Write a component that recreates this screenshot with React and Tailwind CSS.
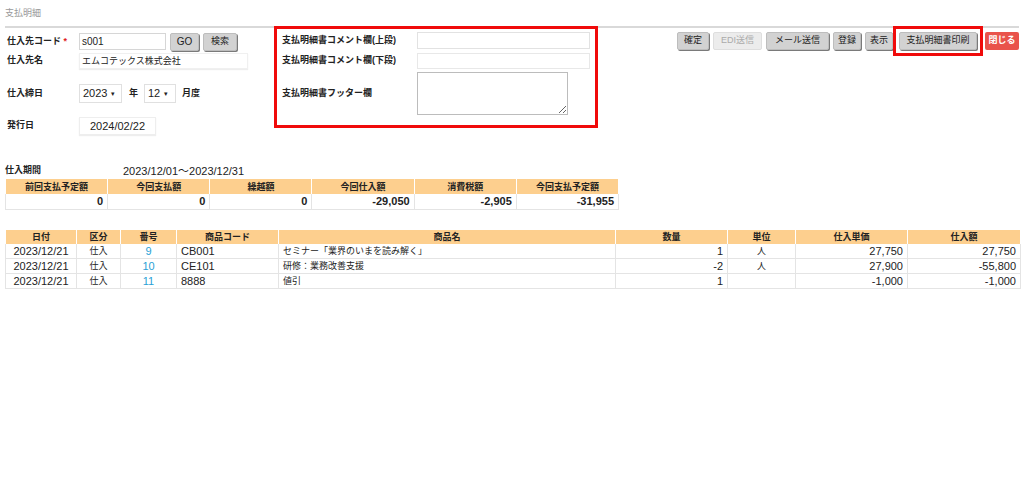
const font = "font-['Liberation_Sans','Noto_Sans_CJK_JP',sans-serif]";

function Btn({ children, className = "" }) {
  return (
    <button className={`h-[18px] flex items-center justify-center rounded-[2px] bg-[#d2d2d2] border border-[#bdbdbd] shadow-[1px_1px_0_#7a7a7a] text-[9px] text-[#222] ${className}`}>
      {children}
    </button>
  );
}

function Label({ children }) {
  return <div className="w-[72px] text-[9px] font-bold text-[#222]">{children}</div>;
}

const summaryHead = ["前回支払予定額", "今回支払額", "繰越額", "今回仕入額", "消費税額", "今回支払予定額"];
const summaryVals = ["0", "0", "0", "-29,050", "-2,905", "-31,955"];

const cols = [
  { h: "日付", w: 71 },
  { h: "区分", w: 44 },
  { h: "番号", w: 56 },
  { h: "商品コード", w: 102 },
  { h: "商品名", w: 337 },
  { h: "数量", w: 112 },
  { h: "単位", w: 68 },
  { h: "仕入単価", w: 112 },
  { h: "仕入額", w: 113 },
];

const rows = [
  ["2023/12/21", "仕入", "9", "CB001", "セミナー「業界のいまを読み解く」", "1", "人", "27,750", "27,750"],
  ["2023/12/21", "仕入", "10", "CE101", "研修：業務改善支援", "-2", "人", "27,900", "-55,800"],
  ["2023/12/21", "仕入", "11", "8888", "値引", "1", "", "-1,000", "-1,000"],
];

// 列ごとの寄せと文字サイズ
const cellCls = [
  "text-center text-[11px]",
  "text-center text-[9px]",
  "text-center text-[11px] text-[#2a9fd6]",
  "text-left pl-[4px] text-[11px]",
  "text-left pl-[4px] text-[9px]",
  "text-right pr-[4px] text-[11px]",
  "text-center text-[9px]",
  "text-right pr-[4px] text-[11px]",
  "text-right pr-[4px] text-[11px]",
];

export default function App() {
  return (
    <div className={`${font} w-[1024px] h-[494px] bg-white px-[5px] text-[#222]`}>
      <div className="h-[26px] pt-[7px] text-[9px] text-[#999]">支払明細</div>
      <div className="h-[2px] bg-[#d9d9d9]" />

      <div className="flex items-start">
        {/* 左フォーム */}
        <div className="w-[269px] pl-[2px] pt-[5px]">
          <div className="flex items-center h-[17px]">
            <Label>
              仕入先コード <span className="text-[#e02020]">*</span>
            </Label>
            <div className="w-[87px] h-[17px] border border-[#d6d6d6] px-[2px] text-[10px] leading-[15px]">s001</div>
            <Btn className="w-[29px] ml-[4px] text-[10px]">GO</Btn>
            <Btn className="w-[34px] ml-[4px]">検索</Btn>
          </div>
          <div className="flex items-center h-[16px] mt-[3px]">
            <Label>仕入先名</Label>
            <div className="w-[169px] h-[16px] border border-[#f0f0f0] shadow-[0_1px_1px_#eee] px-[2px] text-[9px] leading-[14px]">エムコテックス株式会社</div>
          </div>
          <div className="flex items-center h-[19px] mt-[15px]">
            <Label>仕入締日</Label>
            <div className="w-[43px] h-[19px] border border-[#e0e0e0] px-[3px] text-[11px] leading-[17px] flex items-center gap-[4px]">
              2023 <span className="text-[7px]">▾</span>
            </div>
            <div className="ml-[7px] w-[15px] text-[9px] font-bold">年</div>
            <div className="w-[32px] h-[19px] border border-[#e0e0e0] px-[3px] text-[11px] leading-[17px] flex items-center gap-[4px]">
              12 <span className="text-[7px]">▾</span>
            </div>
            <div className="ml-[6px] text-[9px] font-bold">月度</div>
          </div>
          <div className="flex items-center h-[18px] mt-[14px]">
            <Label>発行日</Label>
            <div className="w-[77px] h-[18px] border border-[#eeeeee] shadow-[0_1px_1px_#eee] text-[11px] leading-[16px] text-center">2024/02/22</div>
          </div>
        </div>

        {/* コメント欄 */}
        <div className="mt-[-2px] w-[324px] h-[102px] border-[3px] border-[#f00a0a] pl-[5px] pt-[3px]">
          <div className="flex items-center h-[17px]">
            <div className="w-[135px] text-[9px] font-bold">支払明細書コメント欄(上段)</div>
            <div className="w-[173px] h-[17px] border border-[#e2e2e2]" />
          </div>
          <div className="flex items-center h-[16px] mt-[4px]">
            <div className="w-[135px] text-[9px] font-bold">支払明細書コメント欄(下段)</div>
            <div className="w-[173px] h-[16px] border border-[#e8e8e8]" />
          </div>
          <div className="flex items-center mt-[3px]">
            <div className="w-[135px] text-[9px] font-bold">支払明細書フッター欄</div>
            <textarea readOnly className="w-[151px] h-[43px] border border-[#bcbcbc] block" />
          </div>
        </div>

        {/* ボタン */}
        <div className="ml-auto mt-[-2px] flex items-center gap-[4px]">
          <Btn className="w-[32px]">確定</Btn>
          <button className="w-[49px] h-[18px] rounded-[2px] bg-[#ececec] border border-[#dedede] text-[9px] text-[#aaa]">EDI送信</button>
          <Btn className="w-[63px]">メール送信</Btn>
          <Btn className="w-[28px]">登録</Btn>
          <Btn className="w-[28px]">表示</Btn>
          <div className="ml-[-4px] border-[3px] border-[#f00a0a] px-[3px] py-[3px]">
            <Btn className="w-[78px]">支払明細書印刷</Btn>
          </div>
          <button className="ml-[-2px] w-[34px] h-[18px] rounded-[2px] bg-[#e9534b] text-[9px] font-bold text-white">閉じる</button>
        </div>
      </div>

      {/* 仕入期間 */}
      <div className="mt-[28px] flex items-center h-[16px]">
        <div className="w-[118px] text-[9px] font-bold">仕入期間</div>
        <div className="text-[11px]">2023/12/01～2023/12/31</div>
      </div>
      <table className="table-fixed border-collapse w-[614px]">
        <tbody>
          <tr className="h-[15px] bg-[#fdcf8e]">
            {summaryHead.map((h) => (
              <th key={h} className="w-[102px] border-x border-white text-[9px] font-bold leading-[14px] p-0">{h}</th>
            ))}
          </tr>
          <tr className="h-[15px] border-b border-[#e4e4e4]">
            {summaryVals.map((v, i) => (
              <td key={i} className="border-x border-[#e4e4e4] text-right pr-[4px] text-[11px] font-bold leading-[13px]">{v}</td>
            ))}
          </tr>
        </tbody>
      </table>

      {/* 明細 */}
      <table className="mt-[20px] table-fixed border-collapse w-[1015px]">
        <colgroup>
          {cols.map((c) => (
            <col key={c.h} style={{ width: c.w }} />
          ))}
        </colgroup>
        <tbody>
          <tr className="h-[14px] bg-[#fdcf8e]">
            {cols.map((c) => (
              <th key={c.h} className="border-x border-white text-[9px] font-bold leading-[14px] p-0">{c.h}</th>
            ))}
          </tr>
          {rows.map((r, ri) => (
            <tr key={ri} className="h-[15px] border-b border-[#e4e4e4]">
              {r.map((v, i) => (
                <td key={i} className={`border-x border-[#e4e4e4] leading-[14px] ${cellCls[i]}`}>{v}</td>
              ))}
            </tr>
          ))}
        </tbody>
      </table>
    </div>
  );
}
